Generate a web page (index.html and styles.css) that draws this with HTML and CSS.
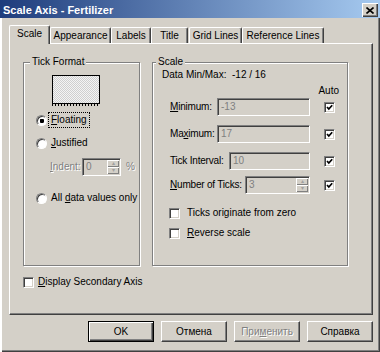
FILE: index.html
```html
<!DOCTYPE html>
<html lang="en">
  <head>
    <meta charset="UTF-8" />
    <title>Scale Axis - Fertilizer</title>
    <link rel="stylesheet" href="styles.css">
  </head>
  <body>
    <div class="window">
      <div class="titlebar">
        <span class="title">Scale Axis - Fertilizer</span>
        <span class="close">
          <svg width="8" height="7" viewBox="0 0 8 7"><path d="M0.5 0.5 L7.5 6.5 M7.5 0.5 L0.5 6.5" stroke="#000" stroke-width="1.6"/></svg>
        </span>
      </div>

      <div class="content">
        <div class="tabs">
          <div class="tab tab-scale active">Scale</div>
          <div class="tab tab-appearance">Appearance</div>
          <div class="tab tab-labels">Labels</div>
          <div class="tab tab-title">Title</div>
          <div class="tab tab-grid">Grid Lines</div>
          <div class="tab tab-ref">Reference Lines</div>
        </div>

        <div class="panel">
          <div class="groups">
            <!-- 左: Tick Format -->
            <fieldset class="group group-tick">
              <legend>Tick Format</legend>
              <div class="preview"></div>
              <div class="preview-edge"></div>
              <div class="row radio-row first">
                <span class="radio checked"></span>
                <span class="radio-label focus"><u>F</u>loating</span>
              </div>
              <div class="row radio-row">
                <span class="radio"></span>
                <span class="radio-label"><u>J</u>ustified</span>
              </div>
              <div class="row indent-row">
                <span class="indent-label disabled"><u>I</u>ndent:</span>
                <span class="field spin-field">
                  <span class="value">0</span>
                  <span class="spin"><span class="spin-btn">▴</span><span class="spin-btn">▾</span></span>
                </span>
                <span class="percent disabled">%</span>
              </div>
              <div class="row radio-row last">
                <span class="radio"></span>
                <span class="radio-label">All <u>d</u>ata values only</span>
              </div>
            </fieldset>

            <!-- 右: Scale -->
            <fieldset class="group group-scale">
              <legend>Scale</legend>
              <div class="data-row">
                <span class="data-label">Data Min/Max:</span>
                <span>-12 / 16</span>
              </div>
              <div class="auto-row">Auto</div>
              <div class="row scale-row row-min">
                <span class="scale-label"><u>M</u>inimum:</span>
                <span class="field w-min"><span class="value">-13</span></span>
                <span class="check checked"></span>
              </div>
              <div class="row scale-row row-max">
                <span class="scale-label">Ma<u>x</u>imum:</span>
                <span class="field w-min"><span class="value">17</span></span>
                <span class="check checked"></span>
              </div>
              <div class="row scale-row row-int">
                <span class="scale-label">Tick Interval:</span>
                <span class="field w-int"><span class="value">10</span></span>
                <span class="check checked"></span>
              </div>
              <div class="row scale-row row-num">
                <span class="scale-label"><u>N</u>umber of Ticks:</span>
                <span class="field spin-field w-num">
                  <span class="value">3</span>
                  <span class="spin"><span class="spin-btn">▴</span><span class="spin-btn">▾</span></span>
                </span>
                <span class="check checked"></span>
              </div>
              <div class="row check-row row-zero">
                <span class="check"></span>
                <span>Ticks originate from zero</span>
              </div>
              <div class="row check-row row-rev">
                <span class="check"></span>
                <span><u>R</u>everse scale</span>
              </div>
            </fieldset>
          </div>

          <div class="row secondary-row">
            <span class="check"></span>
            <span><u>D</u>isplay Secondary Axis</span>
          </div>
        </div>

        <div class="buttons">
          <button class="btn default">OK</button>
          <button class="btn">Отмена</button>
          <button class="btn" disabled>При<u>м</u>енить</button>
          <button class="btn">Справка</button>
        </div>
      </div>
    </div>
  </body>
</html>
```

FILE: styles.css
```css
* {
  box-sizing: border-box;
}

body {
  margin: 0;
  font-family: "Liberation Sans", Arial, sans-serif;
  font-size: 10px;
  line-height: 12px;
  color: #000;
}

u {
  text-decoration: underline;
}

/* ウィンドウ枠 */
.window {
  width: 380px;
  height: 352px;
  background: #d4d0c8;
  box-shadow: inset 2px 0 #fff, inset -1px -1px #404040, inset -2px -2px #808080;
}

.titlebar {
  height: 18px;
  display: flex;
  align-items: flex-end;
  justify-content: space-between;
  padding: 0 2px 1px 3px;
  background: linear-gradient(to right, #1e3c7c, #a6caf0);
}

.title {
  color: #fff;
  font-weight: bold;
  font-size: 11px;
  line-height: 13px;
}

.close {
  width: 16px;
  height: 14px;
  display: flex;
  align-items: center;
  justify-content: center;
  background: #d4d0c8;
  box-shadow: inset 1px 1px #fff, inset -1px -1px #404040, inset -2px -2px #808080;
}

.content {
  padding: 7px 7px 0 9px;
}

/* タブ */
.tabs {
  display: flex;
  align-items: flex-end;
  height: 18px;
}

.tab {
  height: 16px;
  padding-top: 2px;
  text-align: center;
  border-top: 1px solid #fff;
  border-left: 1px solid #fff;
  border-right: 1px solid #404040;
  border-radius: 2px 2px 0 0;
  box-shadow: inset -1px 0 #808080;
}

.tab.active {
  height: 19px;
  margin-bottom: -1px;
  position: relative;
  z-index: 1;
  background: #d4d0c8;
}

.tab-scale { width: 41px; }
.tab-appearance { width: 61px; }
.tab-labels { width: 40px; }
.tab-title { width: 37px; }
.tab-grid { width: 53px; margin-left: 1px; }
.tab-ref { width: 82px; }

.panel {
  height: 272px;
  padding: 12px 0 0 13px;
  border: 1px solid;
  border-color: #fff #404040 #404040 #fff;
  box-shadow: inset -1px -1px #808080;
}

.groups {
  display: flex;
  gap: 12px;
}

/* グループボックス */
.group {
  margin: 0;
  padding: 0;
  min-width: 0;
  height: 210px;
  border: 1px solid #808080;
  box-shadow: inset 1px 1px #fff, 1px 1px #fff;
}

.group legend {
  padding: 0 2px;
  background: #d4d0c8;
  line-height: 12px;
}

.group-tick {
  width: 117px;
}

.group-tick legend {
  margin-left: 6px;
}

.group-scale {
  width: 196px;
}

.group-scale legend {
  margin-left: 3px;
}

.row {
  display: flex;
  align-items: center;
  white-space: nowrap;
}

.preview {
  width: 48px;
  height: 29px;
  margin: 7px 0 0 28px;
  border: 1px solid #000;
  background: repeating-conic-gradient(#cfcfcf 0 25%, #f4f4f4 0 50%) 0 0 / 2px 2px;
}

.preview-edge {
  width: 48px;
  height: 2px;
  margin-left: 28px;
  background: repeating-linear-gradient(to right, #000 0 1px, transparent 1px 3px);
}

.radio-row {
  height: 16px;
  margin-top: 7px;
  padding-left: 12px;
}

.radio-row.first {
  margin-top: 6px;
}

.radio-row.last {
  margin-top: 14px;
}

.radio {
  width: 11px;
  height: 11px;
  flex: none;
  border-radius: 50%;
  border: 1px solid;
  border-color: #808080 #fff #fff #808080;
  box-shadow: inset 1px 1px #404040;
  background: #fff;
}

.radio.checked {
  background: radial-gradient(circle at 55% 55%, #000 0 2px, #fff 2.5px);
}

.radio-label {
  margin-left: 2px;
  padding: 1px 2px;
}

.radio-label.focus {
  outline: 1px dotted #000;
}

.disabled {
  color: #808080;
  text-shadow: 1px 1px #fff;
}

.indent-row {
  height: 18px;
  margin-top: 7px;
  padding-left: 26px;
}

.indent-label {
  width: 32px;
}

.percent {
  margin-left: 5px;
}

/* 入力欄 */
.field {
  height: 18px;
  flex: none;
  display: flex;
  align-items: center;
  padding: 0 1px 0 3px;
  border: 1px solid;
  border-color: #808080 #fff #fff #808080;
  box-shadow: inset 1px 1px #404040, inset -1px -1px #d4d0c8;
  color: #808080;
}

.field .value {
  flex: 1;
}

.spin-field {
  width: 39px;
}

.spin {
  display: flex;
  flex-direction: column;
  width: 12px;
  height: 14px;
}

.spin-btn {
  height: 7px;
  font-size: 6px;
  line-height: 7px;
  text-align: center;
  color: #a0a0a0;
  background: #d4d0c8;
  box-shadow: inset 1px 1px #fff, inset -1px -1px #808080;
}

.w-min { width: 93px; }
.w-int { width: 81px; }
.w-num { width: 65px; }

.data-row {
  display: flex;
  margin-top: 1px;
  padding-left: 9px;
}

.data-label {
  width: 70px;
}

.auto-row {
  margin-top: 4px;
  padding-right: 8px;
  text-align: right;
}

.scale-row {
  height: 18px;
  margin-top: 9px;
  padding: 0 12px 0 17px;
}

.scale-label {
  letter-spacing: -0.2px;
}

.scale-row .field {
  margin-left: auto;
  margin-right: 14px;
}

.row-min { margin-top: 1px; }
.row-num { margin-top: 6px; }

/* チェックボックス */
.check {
  width: 11px;
  height: 11px;
  flex: none;
  border: 1px solid;
  border-color: #808080 #fff #fff #808080;
  box-shadow: inset 1px 1px #404040, inset -1px -1px #d4d0c8;
  background: #fff;
}

.check.checked {
  background: #fff url("data:image/svg+xml;utf8,<svg xmlns='http://www.w3.org/2000/svg' width='9' height='9'><path d='M2 4 L3.8 6 L7.2 2.2' fill='none' stroke='black' stroke-width='1.7'/></svg>") center / 9px 9px no-repeat;
}

.check-row {
  height: 14px;
  margin-top: 6px;
  padding-left: 16px;
  gap: 7px;
}

.row-zero { margin-top: 12px; }

.secondary-row {
  margin-top: 10px;
  gap: 4px;
}

/* ボタン */
.buttons {
  display: flex;
  justify-content: flex-end;
  gap: 7px;
  margin-top: 6px;
}

.btn {
  width: 66px;
  height: 21px;
  padding: 0;
  font: inherit;
  color: #000;
  background: #d4d0c8;
  border: 1px solid;
  border-color: #fff #404040 #404040 #fff;
  box-shadow: inset -1px -1px #808080;
}

.btn.default {
  border-color: #000;
  box-shadow: inset 1px 1px #fff, inset -1px -1px #404040, inset -2px -2px #808080;
}

.btn:disabled {
  color: #808080;
  text-shadow: 1px 1px #fff;
}
```
